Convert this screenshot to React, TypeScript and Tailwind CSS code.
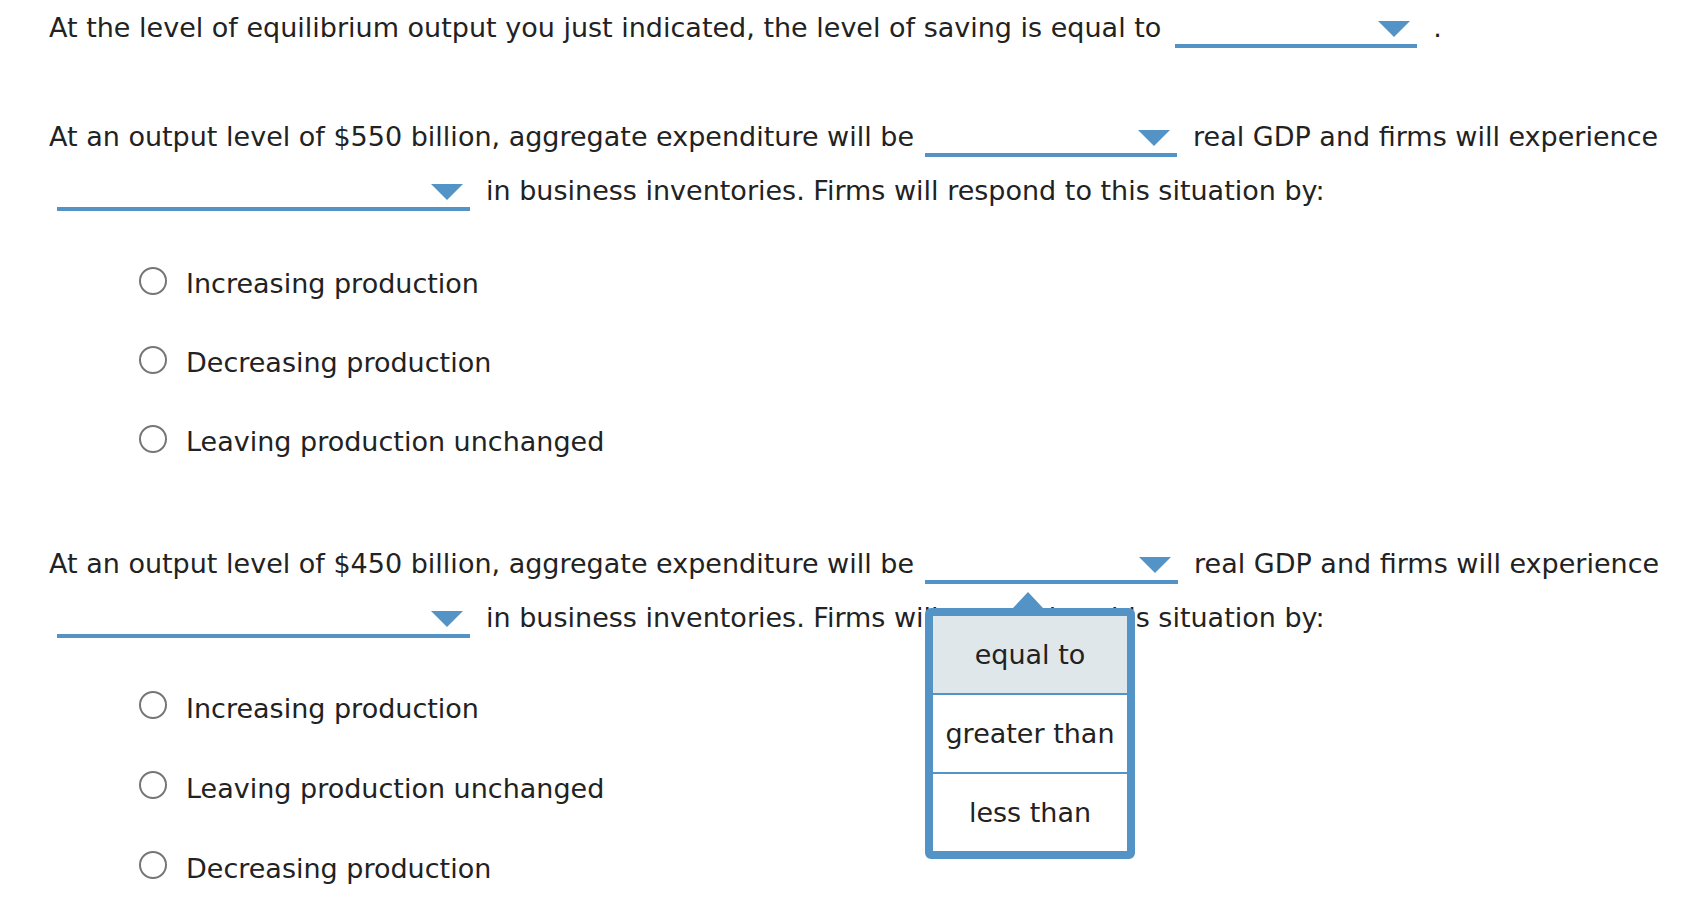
import clsx from "clsx";

// Answer option lists for the inline dropdown.
const options = ["equal to", "greater than", "less than"];

const Arrow = () => (
  <svg width="32" height="16" viewBox="0 0 32 16" className="mt-[2px] block">
    <polygon points="0,0 32,0 16,16" fill="#5493c6" />
  </svg>
);

const Dropdown = ({ className, open }: { className: string; open?: boolean }) => (
  <span
    className={clsx(
      "relative mr-4 mt-1 flex h-[36px] shrink-0 items-center justify-end border-b-4 border-[#5493c6] pr-[7px]",
      className,
    )}
  >
    <Arrow />
    {open ? (
      <div className="absolute left-0 top-[60px] z-10 w-[210px]">
        <svg width="30" height="16" viewBox="0 0 30 16" className="absolute -top-[16px] left-[88px] block">
          <polygon points="0,16 15,0 30,16" fill="#5493c6" />
        </svg>
        <ul className="overflow-hidden rounded-[6px] border-[8px] border-[#5493c6] bg-white">
          {options.map((opt, i) => (
            <li
              key={opt}
              className={clsx(
                "flex items-center justify-center leading-none",
                i === 0 ? "h-[77px] bg-[#dfe7ea]" : "h-[79px] border-t-2 border-[#5493c6]",
              )}
            >
              {opt}
            </li>
          ))}
        </ul>
      </div>
    ) : null}
  </span>
);

const Row = ({ className, children }: { className?: string; children: React.ReactNode }) => (
  <div className={clsx("flex h-[54px] items-center whitespace-nowrap leading-[54px]", className)}>{children}</div>
);

const Radios = ({ items, rowClass, className }: { items: string[]; rowClass: string; className: string }) => (
  <div className={className}>
    {items.map((item) => (
      <label key={item} className={clsx("flex items-center gap-[19px] pl-[139px]", rowClass)}>
        <span className="mb-[8px] size-[28px] shrink-0 rounded-full border-[2.5px] border-[#767676] bg-white" />
        <span>{item}</span>
      </label>
    ))}
  </div>
);

export default function App() {
  return (
    <div className="min-h-screen overflow-hidden bg-white pt-[1px] font-['DejaVu_Sans',sans-serif] text-[27px] text-[#222]">
      {/* first question */}
      <Row className="pl-[49px]">
        <span>At the level of equilibrium output you just indicated, the level of saving is equal to</span>
        <Dropdown className="ml-[14px] w-[242px]" />
        <span>.</span>
      </Row>

      <Row className="mt-[55px] pl-[49px]">
        <span>At an output level of $550 billion, aggregate expenditure will be</span>
        <Dropdown className="ml-[11px] w-[252px]" />
        <span>real GDP and firms will experience</span>
      </Row>
      <Row className="pl-[49px]">
        <Dropdown className="ml-2 w-[413px]" />
        <span>in business inventories. Firms will respond to this situation by:</span>
      </Row>
      <Radios
        className="mt-[27px]"
        rowClass="h-[79px]"
        items={["Increasing production", "Decreasing production", "Leaving production unchanged"]}
      />

      {/* second question, with the menu open */}
      <Row className="mt-[55px] pl-[49px]">
        <span>At an output level of $450 billion, aggregate expenditure will be</span>
        <Dropdown className="ml-[11px] w-[253px]" open />
        <span>real GDP and firms will experience</span>
      </Row>
      <Row className="pl-[49px]">
        <Dropdown className="ml-2 w-[413px]" />
        <span>in business inventories. Firms will respond to this situation by:</span>
      </Row>
      <Radios
        className="mt-[24px]"
        rowClass="h-[80px]"
        items={["Increasing production", "Leaving production unchanged", "Decreasing production"]}
      />
    </div>
  );
}
